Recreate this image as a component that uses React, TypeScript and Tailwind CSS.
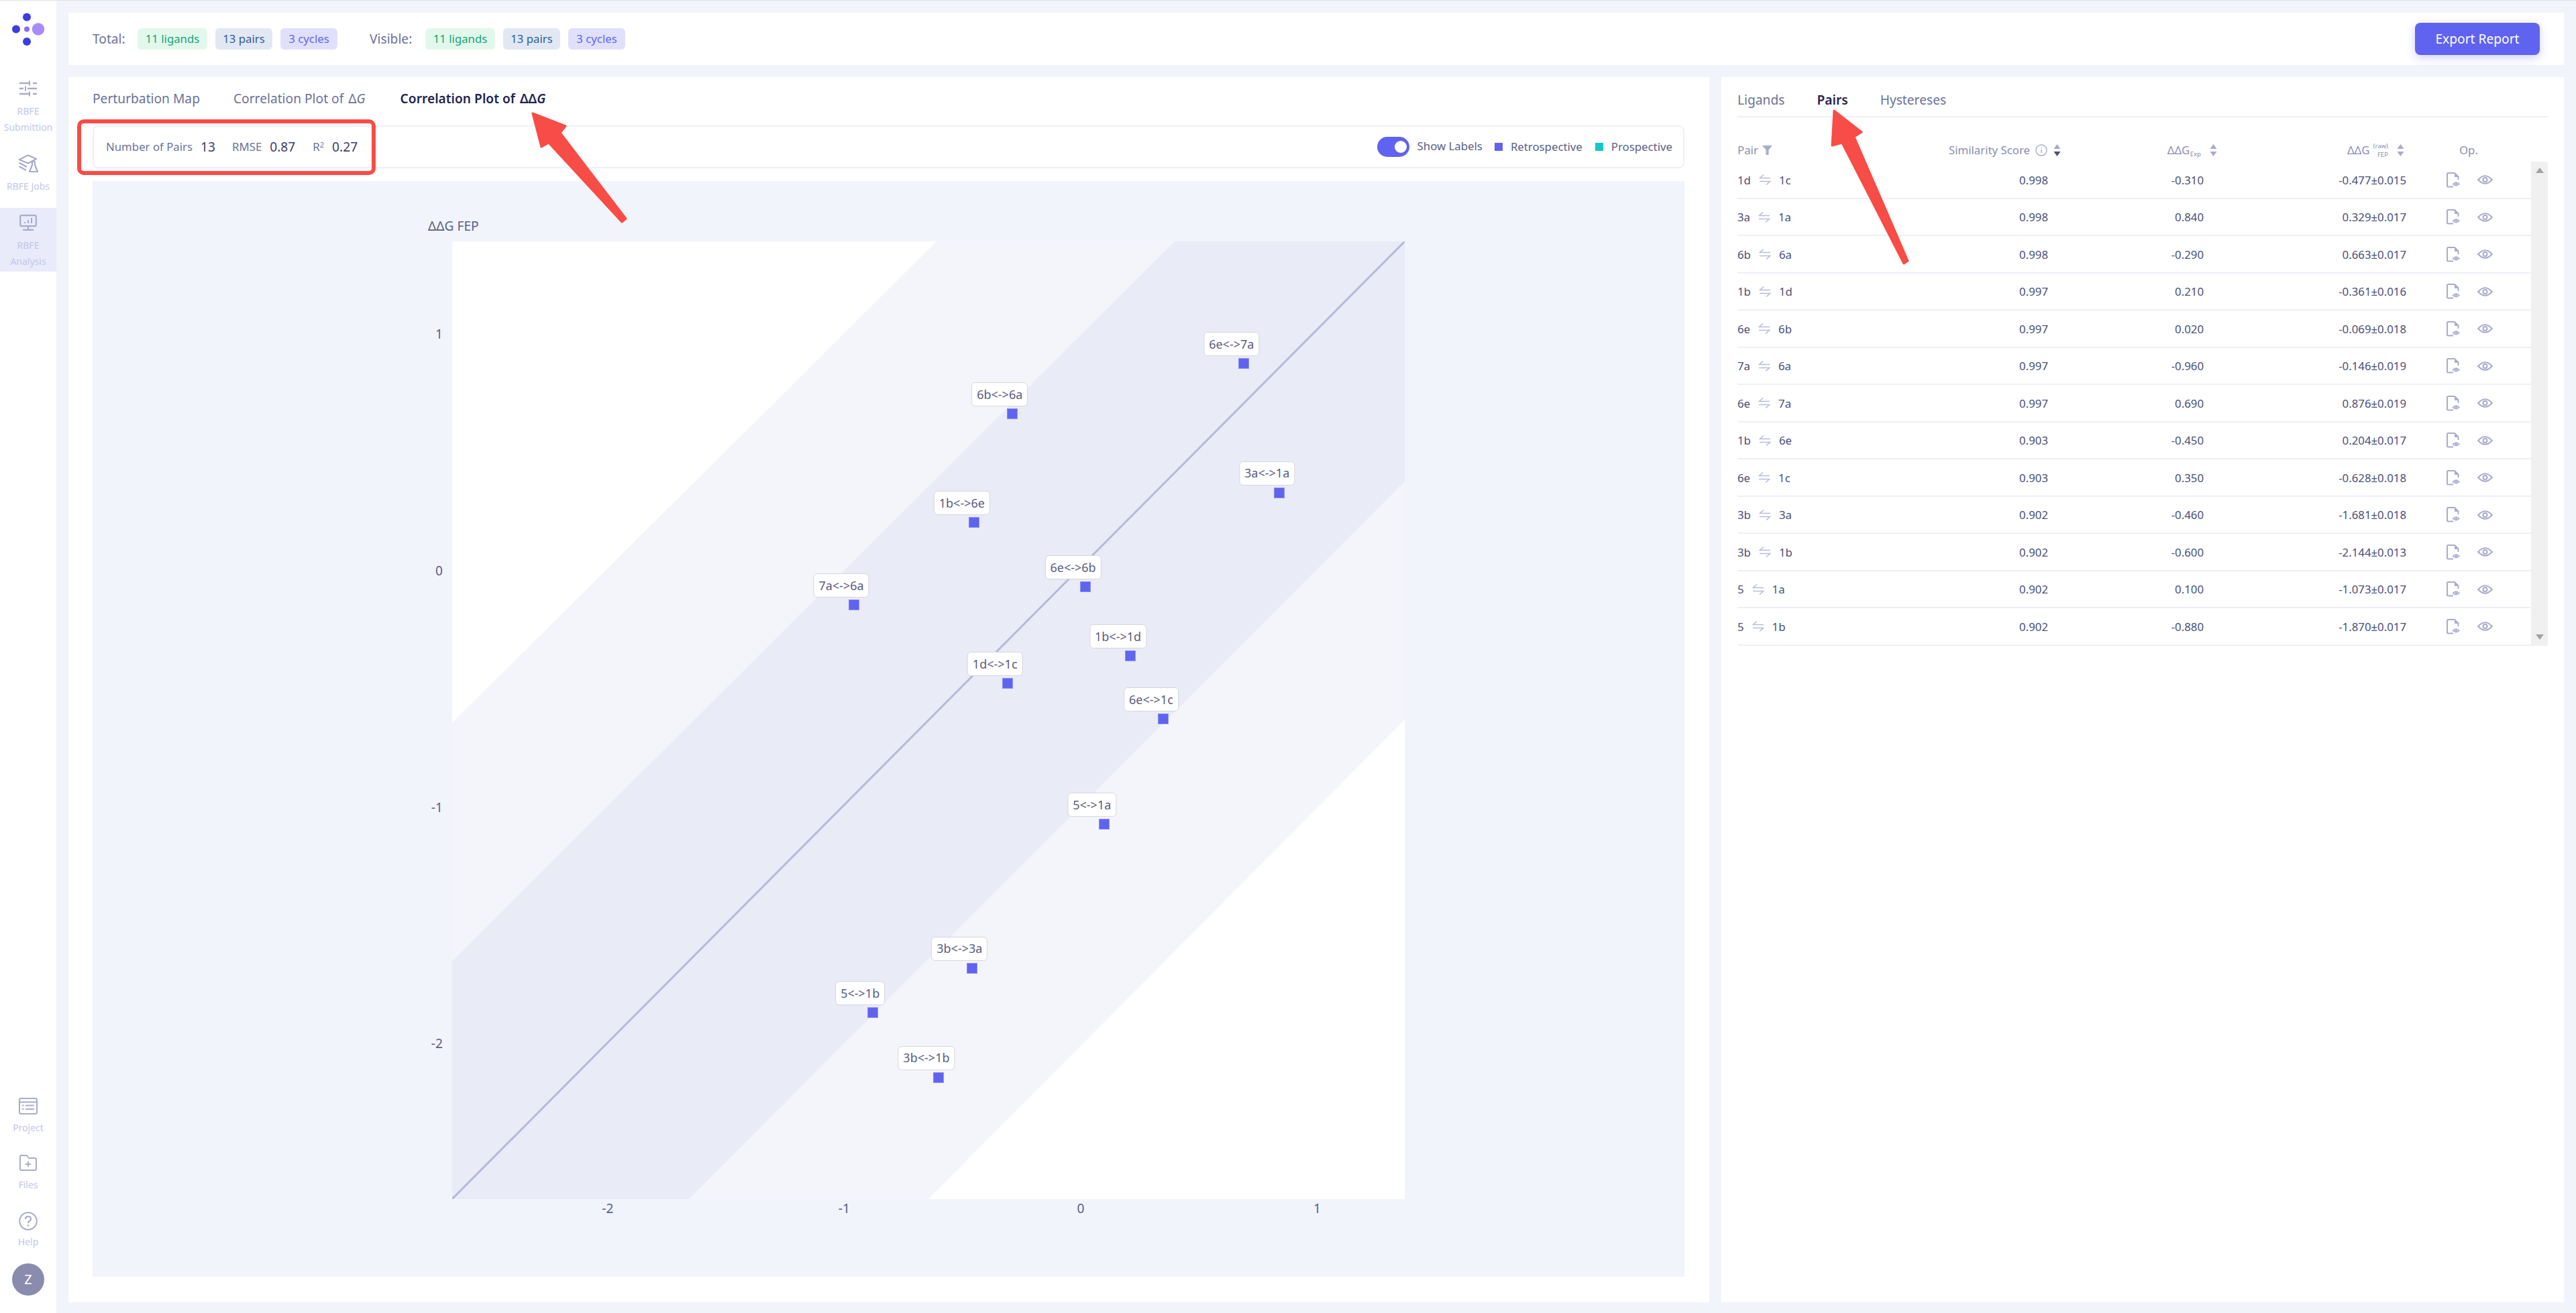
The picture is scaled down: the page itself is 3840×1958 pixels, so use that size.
import type { ReactNode } from "react";

const rows = [
  ["1d", "1c", "0.998", "-0.310", "-0.477±0.015"],
  ["3a", "1a", "0.998", "0.840", "0.329±0.017"],
  ["6b", "6a", "0.998", "-0.290", "0.663±0.017"],
  ["1b", "1d", "0.997", "0.210", "-0.361±0.016"],
  ["6e", "6b", "0.997", "0.020", "-0.069±0.018"],
  ["7a", "6a", "0.997", "-0.960", "-0.146±0.019"],
  ["6e", "7a", "0.997", "0.690", "0.876±0.019"],
  ["1b", "6e", "0.903", "-0.450", "0.204±0.017"],
  ["6e", "1c", "0.903", "0.350", "-0.628±0.018"],
  ["3b", "3a", "0.902", "-0.460", "-1.681±0.018"],
  ["3b", "1b", "0.902", "-0.600", "-2.144±0.013"],
  ["5", "1a", "0.902", "0.100", "-1.073±0.017"],
  ["5", "1b", "0.902", "-0.880", "-1.870±0.017"],
];

// chart canvas is 2373x1634, origin of the data sits here
const X0 = 1473;
const Y0 = 581;
const UNIT = 352.6;

function NavItem({ icon, lines, active }: { icon: ReactNode; lines: string[]; active?: boolean }) {
  return (
    <div className={`flex flex-col items-center pt-[10px] pb-[3px] ${active ? "bg-[#e9ebfb]" : ""}`}>
      <div className="h-[24px] flex items-center justify-center">{icon}</div>
      <div className="mt-[10px] text-center text-[14px] leading-[24px] text-[#c2c6e6]">
        {lines.map((l) => (
          <div key={l}>{l}</div>
        ))}
      </div>
    </div>
  );
}

function Chip({ className, children }: { className: string; children: ReactNode }) {
  return (
    <span className={`h-[32px] flex items-center justify-center rounded-[6px] text-[16.8px] ${className}`}>
      {children}
    </span>
  );
}

function Chips() {
  return (
    <div className="flex gap-[12px]">
      <Chip className="w-[104px] bg-[#e3f8ec] text-[#12a57d]">11 ligands</Chip>
      <Chip className="w-[85px] bg-[#e2e8f3] text-[#2f5c9c]">13 pairs</Chip>
      <Chip className="w-[85px] bg-[#e0e0fb] text-[#6366f1]">3 cycles</Chip>
    </div>
  );
}

function Sort({ active }: { active?: boolean }) {
  return (
    <svg width="13" height="22" viewBox="0 0 13 22" className="shrink-0">
      <path d="M6.5 2 L11.5 9 H1.5 Z" fill="#a9abcc" />
      <path d="M6.5 20 L11.5 13 H1.5 Z" fill={active ? "#4b5078" : "#a9abcc"} />
    </svg>
  );
}

function ArrowsIcon() {
  return (
    <svg width="18" height="18" viewBox="0 0 18 18" fill="none" stroke="#b8bcdc" strokeWidth="1.6" className="shrink-0">
      <path d="M17 6.5 H1.5 L7 1.5" />
      <path d="M1 11.5 H16.5 L11 16.5" />
    </svg>
  );
}

function FileEye() {
  return (
    <svg width="20" height="23" viewBox="0 0 20 23" fill="none" stroke="#a9abcc" strokeWidth="2">
      <path d="M10 21.5 H2.5 Q1 21.5 1 20 V2.5 Q1 1 2.5 1 H12 L17.5 6.5 V11" strokeLinejoin="round" />
      <path d="M12.5 1.5 V6.5 H17.5" fill="#a9abcc" strokeWidth="1" />
      <path d="M9.5 17.5 Q14 12.5 19 17.5 Q14 22 9.5 17.5 Z" strokeWidth="1.4" fill="#e4e5f2" />
      <circle cx="14.2" cy="17.3" r="1.5" fill="#a9abcc" stroke="none" />
    </svg>
  );
}

function Eye() {
  return (
    <svg width="23" height="16" viewBox="0 0 23 16" fill="none" stroke="#a9abcc" strokeWidth="2">
      <path d="M1.2 8 Q11.5 -3.5 21.8 8 Q11.5 19.5 1.2 8 Z" />
      <circle cx="11.5" cy="8" r="3" />
    </svg>
  );
}

export default function App() {
  return (
    <div className="relative flex w-[3840px] h-[1958px] overflow-hidden border-t border-[#dfe4e8] bg-[#f1f4fa] text-[#4b5078] font-['Noto_Sans','Open_Sans',sans-serif]">
      {/* sidebar */}
      <aside className="w-[84px] shrink-0 bg-white flex flex-col">
        <div className="h-[109px] shrink-0 pt-[18px] flex justify-center">
          <svg width="52" height="52" viewBox="0 0 52 52">
            <circle cx="24" cy="6.5" r="6" fill="#3d3de0" />
            <circle cx="8" cy="24.5" r="6" fill="#3d3de0" />
            <circle cx="24" cy="24.5" r="4" fill="#8b6cf2" />
            <circle cx="41" cy="24.5" r="9.3" fill="#a78bfa" />
            <circle cx="24" cy="43" r="6" fill="#3d3de0" />
          </svg>
        </div>
        <nav className="flex flex-col gap-[17px]">
          <NavItem
            lines={["RBFE", "Submittion"]}
            icon={
              <svg width="28" height="24" viewBox="0 0 28 24" stroke="#a9abcc" strokeWidth="2.4" fill="none">
                <path d="M1 4 H15 M21 4 H27 M1 12 H7 M13 12 H27 M1 20 H15 M21 20 H27" />
                <path d="M16 0.5 V7.5 M10 8.5 V15.5 M16 16.5 V23.5" strokeWidth="2" />
              </svg>
            }
          />
          <NavItem
            lines={["RBFE Jobs"]}
            icon={
              <svg width="30" height="28" viewBox="0 0 30 28" stroke="#a9abcc" strokeWidth="2.2" fill="none">
                <path d="M1.5 8 L15 1.5 L27 7 L15 13.5 Z" strokeLinejoin="round" />
                <path d="M1.5 12.5 L13 19 M1.5 18 L12 24" />
                <path d="M20 11 H25 M21 11 V16 L17 26 H29 L25 16 V11" strokeLinejoin="round" />
              </svg>
            }
          />
          <NavItem
            active
            lines={["RBFE", "Analysis"]}
            icon={
              <svg width="26" height="24" viewBox="0 0 26 24" stroke="#a9abcc" strokeWidth="2.2" fill="none">
                <rect x="1.2" y="1.2" width="23.6" height="16" rx="2" />
                <path d="M13 17.5 V22.5 M5 22.8 H21" />
                <path d="M8 13 V11 M13 13 V8 M18 13 V5" strokeWidth="2" />
              </svg>
            }
          />
        </nav>
        <div className="mt-auto flex flex-col items-center gap-[28px] pb-[26px]">
          {[
            {
              label: "Project",
              icon: (
                <svg width="28" height="25" viewBox="0 0 28 25" stroke="#a9abcc" strokeWidth="2" fill="none">
                  <rect x="1" y="1" width="26" height="23" rx="2.5" />
                  <path d="M1 6.5 H27 M10 11.5 H23 M10 17 H23 M5 11.5 H7.5 M5 17 H7.5" />
                </svg>
              ),
            },
            {
              label: "Files",
              icon: (
                <svg width="26" height="24" viewBox="0 0 26 24" stroke="#a9abcc" strokeWidth="2" fill="none">
                  <path d="M1 3 Q1 1 3 1 H11 L14 5 H23 Q25 5 25 7 V21 Q25 23 23 23 H3 Q1 23 1 21 Z" strokeLinejoin="round" />
                  <path d="M13 10 V18 M9 14 H17" />
                </svg>
              ),
            },
          ].map((it) => (
            <div key={it.label} className="flex flex-col items-center">
              <div className="h-[24px] flex items-center">{it.icon}</div>
              <div className="mt-[9px] text-[14px] leading-[24px] text-[#c2c6e6]">{it.label}</div>
            </div>
          ))}
          <div className="flex flex-col items-center gap-[20px]">
            <div className="flex flex-col items-center">
              <svg width="28" height="28" viewBox="0 0 28 28" fill="none" stroke="#a9abcc" strokeWidth="2" className="-mb-[1px]">
                <circle cx="14" cy="14" r="12.8" />
                <path d="M10 11 Q10 7 14 7 Q18 7 18 10.5 Q18 13 15.5 14 Q14 14.7 14 17" strokeWidth="2.2" />
                <circle cx="14" cy="20.5" r="1.3" fill="#a9abcc" stroke="none" />
              </svg>
              <div className="mt-[6px] text-[14px] leading-[24px] text-[#c2c6e6]">Help</div>
            </div>
            <div className="w-[48px] h-[48px] rounded-full bg-[#8b8bad] text-white text-[20px] flex items-center justify-center">
              Z
            </div>
          </div>
        </div>
      </aside>

      {/* main */}
      <main className="flex-1 min-w-0 flex flex-col gap-[18px] pt-[18px] pl-[18px] pr-[18px] pb-[16px]">
        <header className="h-[78px] shrink-0 bg-white flex items-center pl-[36px] pr-[36px]">
          <span className="text-[19.2px] w-[67px] text-[#6b7299]">Total:</span>
          <Chips />
          <span className="text-[19.2px] ml-[48px] w-[83px] text-[#6b7299]">Visible:</span>
          <Chips />
          <button className="ml-auto w-[186px] h-[48px] rounded-[8px] bg-[#6063f0] text-white text-[19.2px] shadow-[0_4px_14px_rgba(96,99,240,0.3)]">
            Export Report
          </button>
        </header>

        <div className="flex-1 min-h-0 flex gap-[18px]">
          {/* left panel */}
          <section className="w-[2446px] shrink-0 bg-white px-[36px] flex flex-col">
            <div className="h-[64px] shrink-0 flex items-center gap-[47px] text-[19.2px] text-[#6b7299]">
              <span className="mr-[3px]">Perturbation Map</span>
              <span>
                Correlation Plot of <span className="ml-[2px]">Δ<i>G</i></span>
              </span>
              <span className="ml-[5px] font-semibold text-[#1f2550]">
                Correlation Plot of <span className="ml-[2px]">ΔΔ<i>G</i></span>
              </span>
            </div>
            <div className="mt-[8px] h-[64px] shrink-0 w-[2373px] border-2 border-[#eeeefa] rounded-[8px] flex items-center pl-[18px] pr-[16px]">
              <span className="text-[16.8px] text-[#6b7299]">Number of Pairs</span>
              <span className="ml-[12px] text-[19.2px] text-[#3c4068]">13</span>
              <span className="ml-[25px] text-[16.8px] text-[#6b7299]">RMSE</span>
              <span className="ml-[12px] text-[19.2px] text-[#3c4068]">0.87</span>
              <span className="ml-[26px] text-[16.8px] text-[#6b7299]">
                R<sup className="text-[11px]">2</sup>
              </span>
              <span className="ml-[12px] text-[19.2px] text-[#3c4068]">0.27</span>
              <div className="ml-auto flex items-center text-[16.8px] text-[#5a5f85]">
                <div className="relative w-[48px] h-[30px] rounded-full bg-[#6063f0]">
                  <div className="absolute right-[4px] top-[6px] w-[18px] h-[18px] rounded-full bg-white" />
                </div>
                <span className="ml-[12px] -mt-[3px]">Show Labels</span>
                <span className="ml-[18px] w-[12px] h-[12px] bg-[#6063f0]" />
                <span className="ml-[12px]">Retrospective</span>
                <span className="ml-[19px] w-[12px] h-[12px] bg-[#12c9c9]" />
                <span className="ml-[12px]">Prospective</span>
              </div>
            </div>

            {/* chart */}
            <div className="relative mt-[19px] h-[1634px] shrink-0 w-[2373px] bg-[#f1f4fa] text-[19.2px]">
              <span className="absolute left-[500px] top-[67px] -translate-y-1/2 text-[#5a5f85]">ΔΔG FEP</span>
              <svg className="absolute left-[536px] top-[90px]" width="1420" height="1428" viewBox="0 0 1420 1428">
                <rect width="1420" height="1428" fill="#ffffff" />
                <path d="M0 718 L722 0 H1420 V713 L710 1428 H0 Z" fill="#f4f5fb" />
                <path d="M0 1073 L1077 0 H1420 V358 L353 1428 H0 Z" fill="#e9ebf7" />
                <path d="M0 1428 L1420 0" stroke="#b6b9d9" strokeWidth="3" />
              </svg>
              {[1, 0, -1, -2].map((t) => (
                <span
                  key={`y${t}`}
                  className="absolute right-[1851px] -translate-y-1/2 text-[#5a5f85]"
                  style={{ top: Y0 - t * UNIT }}
                >
                  {t}
                </span>
              ))}
              {[-2, -1, 0, 1].map((t) => (
                <span
                  key={`x${t}`}
                  className="absolute top-[1532px] -translate-x-1/2 -translate-y-1/2 text-[#5a5f85]"
                  style={{ left: X0 + t * UNIT }}
                >
                  {t}
                </span>
              ))}
              {rows.map((r) => {
                const x = X0 + parseFloat(r[3]) * UNIT;
                const y = Y0 - parseFloat(r[4]) * UNIT;
                return (
                  <div key={r[0] + r[1]}>
                    <div
                      className="absolute w-[16px] h-[16px] -ml-[8px] -mt-[8px] bg-[#6063f0] border border-[#8d8ff5]"
                      style={{ left: x, top: y }}
                    />
                    <div
                      className="absolute h-[36px] px-[7px] -translate-x-1/2 flex items-center whitespace-nowrap bg-white border border-[#d6d6dc] rounded-[6px] text-[18px] text-[#5a5b80]"
                      style={{ left: x - 18.5, top: y - 47 }}
                    >
                      {r[0]}&lt;-&gt;{r[1]}
                    </div>
                  </div>
                );
              })}
            </div>
          </section>

          {/* right panel */}
          <section className="flex-1 min-w-0 bg-white px-[24px]">
            <div className="h-[60px] pt-[11px] flex items-center gap-[48px] border-b-2 border-[#eeeff3] text-[19.2px] text-[#6b7299]">
              <span>Ligands</span>
              <span className="font-semibold text-[#1f2550]">Pairs</span>
              <span>Hystereses</span>
            </div>
            <div className="h-[66px] pt-[32px] grid grid-cols-[200px_283px_233px_279px_188px] items-center text-[16.8px] text-[#8a8eb0]">
              <div className="flex items-center gap-[6px]">
                Pair
                <svg width="15" height="14" viewBox="0 0 15 14">
                  <path d="M0 0 H15 L9.5 6.5 V14 H5.5 V6.5 Z" fill="#a9abcc" />
                </svg>
              </div>
              <div className="flex items-center justify-end gap-[8px]">
                Similarity Score
                <svg width="18" height="18" viewBox="0 0 18 18" fill="none" stroke="#a9abcc" strokeWidth="1.4">
                  <circle cx="9" cy="9" r="8" />
                  <path d="M9 8 V13 M9 5 V6.2" />
                </svg>
                <Sort active />
              </div>
              <div className="flex items-center justify-end gap-[12px]">
                <span>
                  ΔΔG <sub className="text-[9.6px] -ml-[4px]">Exp</sub>
                </span>
                <Sort />
              </div>
              <div className="flex items-center justify-end gap-[12px]">
                <span>ΔΔG</span>
                <span className="-ml-[7px] flex flex-col text-[9.6px] leading-[13px] items-end">
                  <span>(raw)</span>
                  <span>FEP</span>
                </span>
                <Sort />
              </div>
              <div className="pl-[81px]">Op.</div>
            </div>
            <div className="flex">
              <div className="flex-1 min-w-0">
                {rows.map((r) => (
                  <div
                    key={r[0] + r[1]}
                    className="h-[55.5px] pt-[1px] grid grid-cols-[200px_263px_232px_302px_186px] items-center border-b-2 border-[#eeeefa] text-[16.8px]"
                  >
                    <div className="flex items-center gap-[12px]">
                      <span>{r[0]}</span>
                      <ArrowsIcon />
                      <span>{r[1]}</span>
                    </div>
                    <div className="text-right">{r[2]}</div>
                    <div className="text-right">{r[3]}</div>
                    <div className="text-right">{r[4]}</div>
                    <div className="pl-[60px] flex items-center gap-[26px]">
                      <FileEye />
                      <Eye />
                    </div>
                  </div>
                ))}
              </div>
              <div className="w-[25px] shrink-0 bg-[#f0f0f0] flex flex-col items-center justify-between py-[9px]">
                <svg width="12" height="8" viewBox="0 0 12 8">
                  <path d="M6 0 L12 8 H0 Z" fill="#a3a3a3" />
                </svg>
                <svg width="12" height="8" viewBox="0 0 12 8">
                  <path d="M6 8 L12 0 H0 Z" fill="#a3a3a3" />
                </svg>
              </div>
            </div>
          </section>
        </div>
      </main>

      {/* red annotations laid over the page */}
      <div className="absolute left-[115px] top-[177px] w-[445px] h-[83px] border-[6px] border-[#f84c46] rounded-[10px] pointer-events-none" />
      <svg className="absolute left-0 -top-[1px] pointer-events-none" width="3840" height="1958" viewBox="0 0 3840 1958">
        <path
          d="M794 169 L843 188 L835 198 L933 326 L927 331 L818 213 L807 219 Z"
          fill="#f84c46"
          stroke="#f84c46"
          strokeWidth="3"
          strokeLinejoin="round"
        />
        <path
          d="M2734 165 L2775 197 L2764 204 L2844 389 L2838 393 L2746 213 L2731 217 Z"
          fill="#f84c46"
          stroke="#f84c46"
          strokeWidth="3"
          strokeLinejoin="round"
        />
      </svg>
    </div>
  );
}
